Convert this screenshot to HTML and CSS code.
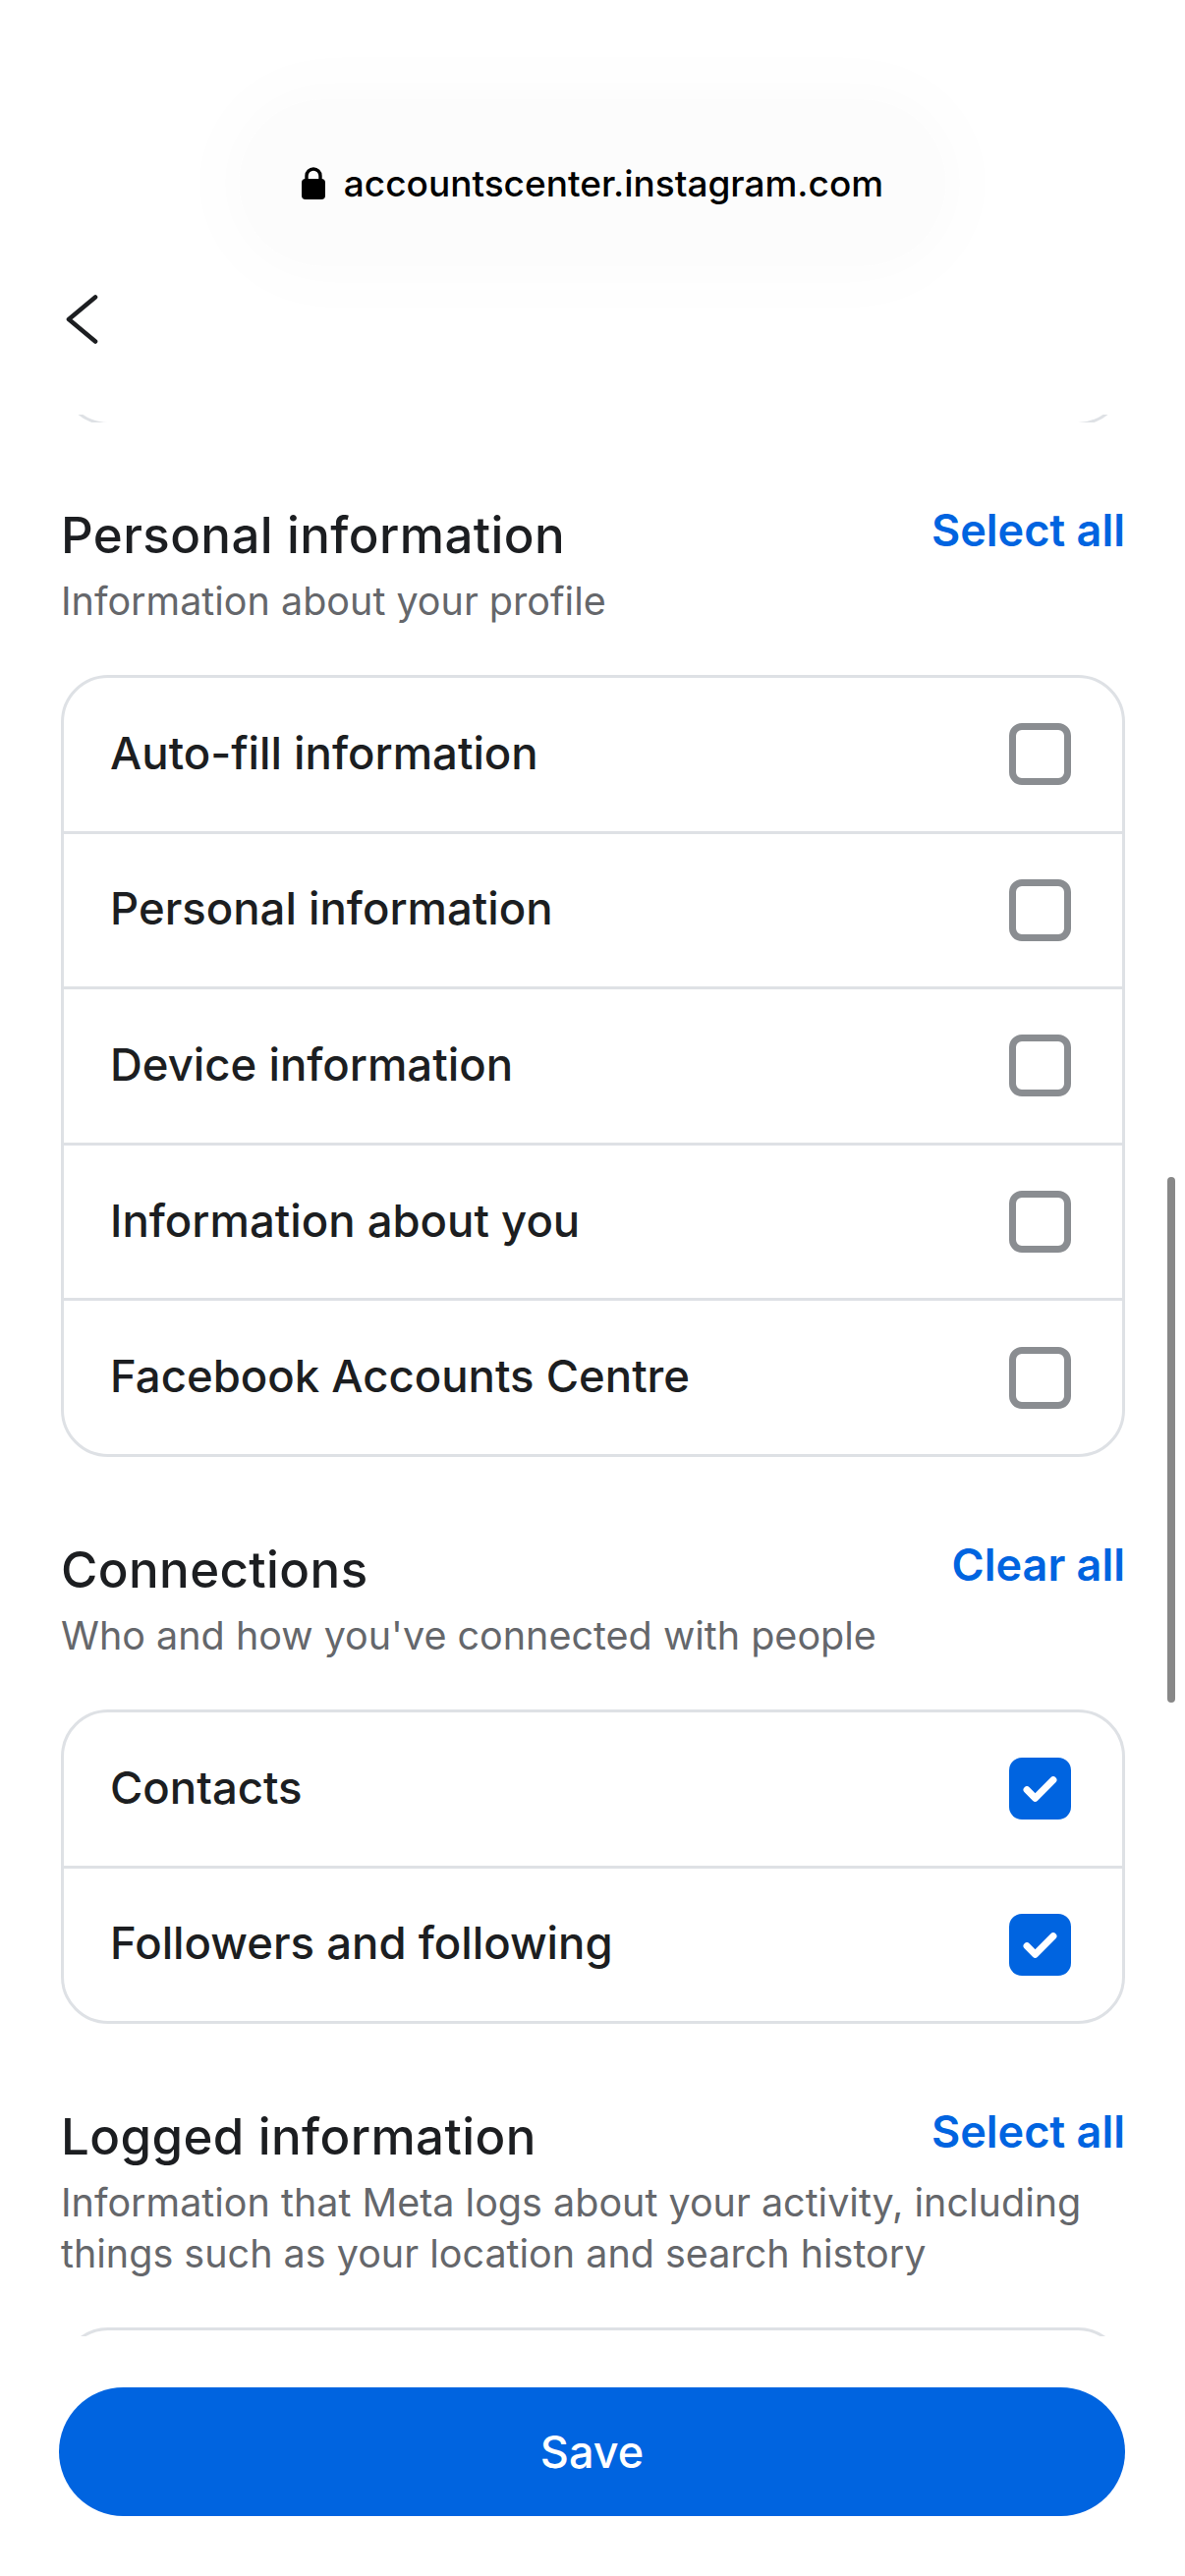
FILE: index.html
```html
<!DOCTYPE html>
<html>

<head>
    <meta charset="utf-8">
    <title>Download your information</title>

    <link rel="stylesheet" href="styles.css">
</head>

<body>

    <div class="screen">
        <header class="top">
            <div class="urlbar">
                <div class="url-pill">
                    <svg class="lock" viewBox="0 0 24 33" width="24" height="33">
                        <path d="M5 13 V9 a7 7 0 0 1 14 0 V13" fill="none" stroke="#000" stroke-width="3.4" />
                        <rect x="0" y="12" width="24" height="21" rx="4" fill="#000" />
                    </svg>
                    <span class="url-text">accountscenter.instagram.com</span>
                </div>
            </div>
            <div class="navbar">
                <svg class="back" viewBox="0 0 34 50" width="34" height="50">
                    <polyline points="30,2.5 3,25 30,47.5" fill="none" stroke="#1c1e21" stroke-width="4.6" stroke-linecap="round" stroke-linejoin="round" />
                </svg>
            </div>
        </header>

        <main class="content">
            <div class="card-tail">
                <div class="card-tail-inner"></div>
            </div>

            <section class="group">
                <div class="group-head">
                    <h2 class="group-title">Personal information</h2>
                    <a class="group-action">Select all</a>
                </div>
                <p class="group-desc">Information about your profile</p>
                <ul class="card">
                    <li class="row"><span class="row-label">Auto-fill information</span><span class="check"></span></li>
                    <li class="row"><span class="row-label">Personal information</span><span class="check"></span></li>
                    <li class="row"><span class="row-label">Device information</span><span class="check"></span></li>
                    <li class="row"><span class="row-label">Information about you</span><span class="check"></span></li>
                    <li class="row"><span class="row-label">Facebook Accounts Centre</span><span class="check"></span></li>
                </ul>
            </section>

            <section class="group">
                <div class="group-head">
                    <h2 class="group-title">Connections</h2>
                    <a class="group-action">Clear all</a>
                </div>
                <p class="group-desc">Who and how you've connected with people</p>
                <ul class="card">
                    <li class="row"><span class="row-label">Contacts</span>
                        <span class="check checked">
                            <svg viewBox="0 0 24 24" width="63" height="63">
                                <polyline points="6.9,12.5 10.1,15.7 17.1,8.7" fill="none" stroke="#fff" stroke-width="2.7" stroke-linecap="round" stroke-linejoin="round" />
                            </svg>
                        </span>
                    </li>
                    <li class="row"><span class="row-label">Followers and following</span>
                        <span class="check checked">
                            <svg viewBox="0 0 24 24" width="63" height="63">
                                <polyline points="6.9,12.5 10.1,15.7 17.1,8.7" fill="none" stroke="#fff" stroke-width="2.7" stroke-linecap="round" stroke-linejoin="round" />
                            </svg>
                        </span>
                    </li>
                </ul>
            </section>

            <section class="group">
                <div class="group-head">
                    <h2 class="group-title">Logged information</h2>
                    <a class="group-action">Select all</a>
                </div>
                <p class="group-desc">Information that Meta logs about your activity, including
                    things such as your location and search history</p>
                <div class="card card-peek"></div>
            </section>
        </main>

        <footer class="bottom">
            <button type="button" class="save-btn">Save</button>
        </footer>

        <div class="scroll-thumb"></div>
    </div>

</body>

</html>
```

FILE: styles.css
```css
body {
    margin: 0;
    background: #fff;
    font-family: Inter, "Noto Sans", sans-serif;
    color: #1c1e21;
}

.screen {
    position: relative;
    height: 2622px;
    display: flex;
    flex-direction: column;
    overflow: hidden;
}

/* top: address bar + back button */
.top {
    height: 422px;
    flex-shrink: 0;
    display: flex;
    flex-direction: column;
}

.urlbar {
    height: 270px;
    display: flex;
    justify-content: center;
    padding-top: 101px;
    box-sizing: border-box;
}

.url-pill {
    width: 720px;
    height: 170px;
    border-radius: 85px;
    background: rgba(0, 0, 0, 0.01);
    box-shadow: 0 0 60px 30px rgba(0, 0, 0, 0.01);
    display: flex;
    align-items: center;
    justify-content: center;
    gap: 19px;
}

.lock {
    display: block;
}

.url-text {
    font-size: 37px;
    font-weight: 500;
    color: #000;
}

.navbar {
    height: 152px;
    padding: 30px 0 0 67px;
    box-sizing: border-box;
}

.back {
    display: block;
}

/* scrolling content */
.content {
    flex: 1;
    overflow: hidden;
    padding: 0 61px 0 62px;
}

.card-tail {
    height: 8px;
    overflow: hidden;
}

.card-tail-inner {
    height: 100px;
    margin-top: -92px;
    border: 3px solid #dee1e5;
    border-top: 0;
    border-radius: 0 0 48px 48px;
}

.group {
    padding-top: 85px;
}

.group-head {
    display: flex;
    justify-content: space-between;
    align-items: flex-start;
}

.group-title {
    margin: 0;
    font-size: 51px;
    line-height: 60px;
    font-weight: 500;
    letter-spacing: 0.4px;
    color: #1c1e21;
}

.group-action {
    font-size: 45px;
    line-height: 50px;
    font-weight: 600;
    color: #0064e0;
}

.group-desc {
    margin: 11px 0 0;
    font-size: 39.5px;
    line-height: 52px;
    color: #65676b;
}

.card {
    list-style: none;
    margin: 49px 0 0;
    padding: 0;
    border: 3px solid #dee1e5;
    border-radius: 48px;
}

.card-peek {
    height: 150px;
}

.row {
    height: 155.6px;
    display: flex;
    align-items: center;
    justify-content: space-between;
    padding: 0 52px 0 47px;
}

.row + .row {
    border-top: 3px solid #dee1e5;
}

.row-label {
    font-size: 45.5px;
    font-weight: 500;
    margin-top: -3px;
}

.check {
    width: 63px;
    height: 63px;
    box-sizing: border-box;
    border: 7px solid #8a8d91;
    border-radius: 13px;
}

.check.checked {
    border: 0;
    background: #0064e0;
}

.check svg {
    display: block;
}

/* bottom */
.bottom {
    height: 244px;
    flex-shrink: 0;
    background: #fff;
    padding: 52px 61px 0 60px;
    box-sizing: border-box;
}

.save-btn {
    width: 100%;
    height: 131px;
    border: 0;
    border-radius: 66px;
    background: #0064e0;
    color: #fff;
    font-family: Inter, "Noto Sans", sans-serif;
    font-size: 45px;
    font-weight: 500;
}

.scroll-thumb {
    position: absolute;
    top: 1198px;
    right: 10px;
    width: 8px;
    height: 535px;
    border-radius: 4px;
    background: #888;
}
```
